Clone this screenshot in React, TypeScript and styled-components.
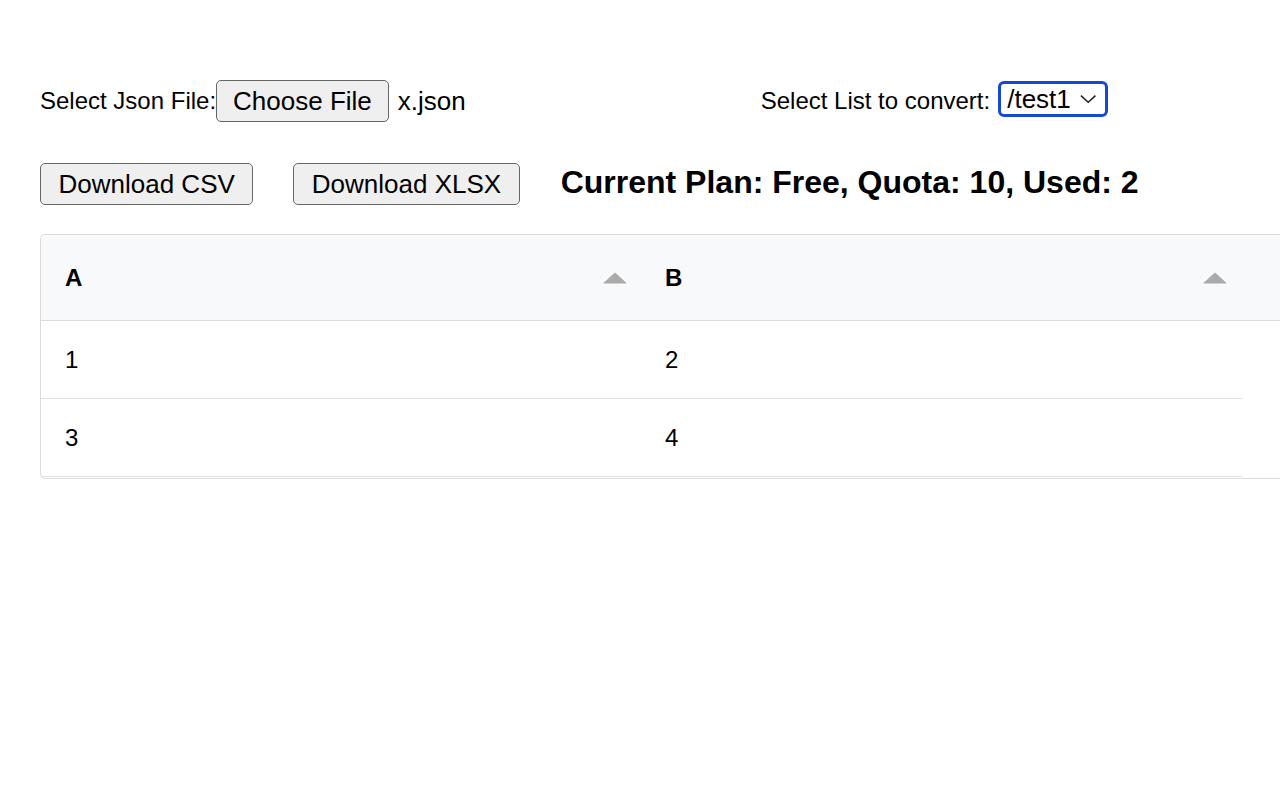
import React from "react";
import styled, { createGlobalStyle } from "styled-components";

const Global = createGlobalStyle`
  html, body {
    margin: 0;
    padding: 0;
    background: #ffffff;
    overflow: hidden;
  }
  body {
    font-family: "Liberation Sans", Arial, Helvetica, sans-serif;
    color: #000;
  }
`;

const Page = styled.div`
  padding: 80px 0 0 40px;
  display: flex;
  flex-direction: column;
`;

const TopRow = styled.div`
  display: flex;
  align-items: center;
  height: 42px;
`;

const Group = styled.div<{ $offset?: number }>`
  display: flex;
  align-items: center;
  margin-left: ${(p) => p.$offset ?? 0}px;
`;

const Label = styled.span`
  font-size: 24px;
  line-height: 28px;
  white-space: nowrap;
`;

const NativeButton = styled.button`
  font-family: "Liberation Sans", Arial, Helvetica, sans-serif;
  font-size: 26px;
  line-height: 30px;
  height: 42px;
  padding: 0 17.5px;
  color: #000;
  background: #efefef;
  border: 1px solid #666666;
  border-radius: 5px;
  white-space: nowrap;
  cursor: default;
`;

const FileButton = styled(NativeButton)`
  padding: 0 16px;
`;

const FileName = styled.span`
  font-size: 26px;
  margin-left: 9px;
  white-space: nowrap;
`;

const SelectBox = styled.div`
  display: flex;
  align-items: center;
  box-sizing: border-box;
  width: 110px;
  height: 36px;
  margin: 0 0 4px 8px;
  padding: 0 9px 0 6px;
  border: 3px solid #1449d2;
  border-radius: 6px;
  font-size: 26px;
  gap: 9px;
`;

const SecondRow = styled.div`
  display: flex;
  align-items: center;
  margin-top: 41px;
  height: 42px;
  gap: 40px;
`;

const PlanText = styled.h2`
  margin: 0 0 4px 1px;
  font-size: 32px;
  line-height: 37px;
  font-weight: bold;
  white-space: nowrap;
`;

const Grid = styled.div`
  margin-top: 29px;
  width: 1300px;
  border: 1px solid #dcdcdc;
  border-radius: 5px;
  padding-bottom: 1px;
  background: #fff;
`;

const HeaderRow = styled.div`
  display: flex;
  height: 85px;
  background: #f8f9fa;
  border-bottom: 1px solid #dcdcdc;
  border-radius: 5px 5px 0 0;
`;

const HeaderCell = styled.div`
  width: 600px;
  box-sizing: border-box;
  display: flex;
  align-items: center;
  justify-content: space-between;
  padding: 0 14px 0 24px;
  font-size: 24px;
  font-weight: bold;
`;

const BodyRow = styled.div`
  display: flex;
  width: 1201px;
  height: 77px;
  border-bottom: 1px solid #e2e2e2;
`;

const BodyCell = styled.div`
  width: 600px;
  box-sizing: border-box;
  display: flex;
  align-items: center;
  padding: 0 24px;
  font-size: 24px;
`;

const SortArrow = () => (
  <svg width="24" height="12" viewBox="0 0 24 12">
    <polygon points="0,11.5 12,0.5 24,11.5" fill="#aaaaaa" />
  </svg>
);

const Chevron = () => (
  <svg width="17" height="10" viewBox="0 0 17 10">
    <polyline points="1,1.5 8.5,8.5 16,1.5" fill="none" stroke="#222" strokeWidth="1.5" />
  </svg>
);

const columns = ["A", "B"];
const rows = [
  ["1", "2"],
  ["3", "4"],
];

export default function App() {
  return (
    <>
      <Global />
      <Page>
        <TopRow>
          <Group>
            <Label>Select Json File:</Label>
            <FileButton>Choose File</FileButton>
            <FileName>x.json</FileName>
          </Group>
          <Group $offset={295}>
            <Label>Select List to convert:</Label>
            <SelectBox>
              <span>/test1</span>
              <Chevron />
            </SelectBox>
          </Group>
        </TopRow>
        <SecondRow>
          <NativeButton>Download CSV</NativeButton>
          <NativeButton>Download XLSX</NativeButton>
          <PlanText>Current Plan: Free, Quota: 10, Used: 2</PlanText>
        </SecondRow>
        <Grid>
          <HeaderRow>
            {columns.map((c) => (
              <HeaderCell key={c}>
                <span>{c}</span>
                <SortArrow />
              </HeaderCell>
            ))}
          </HeaderRow>
          {rows.map((r, i) => (
            <BodyRow key={i}>
              {r.map((v, j) => (
                <BodyCell key={j}>{v}</BodyCell>
              ))}
            </BodyRow>
          ))}
        </Grid>
      </Page>
    </>
  );
}
